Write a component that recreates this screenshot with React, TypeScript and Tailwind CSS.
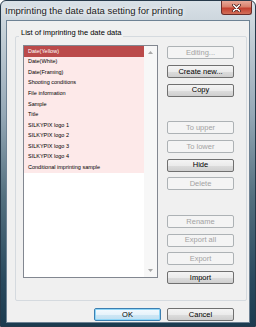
const items = [
  "Date(Yellow)",
  "Date(White)",
  "Date(Framing)",
  "Shooting conditions",
  "File information",
  "Sample",
  "Title",
  "SILKYPIX logo 1",
  "SILKYPIX logo 2",
  "SILKYPIX logo 3",
  "SILKYPIX logo 4",
  "Conditional imprinting sample",
];

// null = empty slot in the button column
const buttons: ({ label: string; enabled: boolean } | null)[] = [
  { label: "Editing...", enabled: false },
  { label: "Create new...", enabled: true },
  { label: "Copy", enabled: true },
  null,
  { label: "To upper", enabled: false },
  { label: "To lower", enabled: false },
  { label: "Hide", enabled: true },
  { label: "Delete", enabled: false },
  null,
  { label: "Rename", enabled: false },
  { label: "Export all", enabled: false },
  { label: "Export", enabled: false },
  { label: "Import", enabled: true },
];

function Button({
  label,
  enabled,
  isDefault,
}: {
  label: string;
  enabled: boolean;
  isDefault?: boolean;
}) {
  if (!enabled) {
    return (
      <div className="flex h-[13px] w-[67px] items-center justify-center rounded-[2px] border border-[#adb2b5] bg-[#f4f4f4] text-[7.5px] leading-none text-[#a3a3a3]">
        {label}
      </div>
    );
  }
  if (isDefault) {
    return (
      <div className="flex h-[13px] w-[67px] items-center justify-center rounded-[2px] border border-[#3c7fb1] bg-[linear-gradient(180deg,#f4fafe_0%,#e6f3fb_50%,#cfe7f5_51%,#bfdff1_100%)] text-[7.5px] leading-none text-black shadow-[inset_0_0_0_1px_#8ed6f8]">
        {label}
      </div>
    );
  }
  return (
    <div className="flex h-[13px] w-[67px] items-center justify-center rounded-[2px] border border-[#707070] bg-[linear-gradient(180deg,#f4f4f4_0%,#ebebeb_50%,#dddddd_51%,#cfcfcf_100%)] text-[7.5px] leading-none text-black">
      {label}
    </div>
  );
}

export default function App() {
  return (
    <div
      className="flex h-[327px] w-[256px] flex-col overflow-hidden rounded-t-[6px] border border-[#26394a] bg-[linear-gradient(180deg,#d9e1e7_0%,#c9d3da_8%,#95a8b6_35%,#54707f_60%,#2a4a5e_85%,#1b3b4f_100%)]"
      style={{ fontFamily: '"Liberation Sans", Arial, sans-serif' }}
    >
      {/* TITLE BAR */}
      <div className="flex h-[19px] shrink-0 items-start justify-between pl-[4px] pr-[3px]">
        <span className="mt-[4px] text-[9.5px] leading-[11px] text-[#1a1a1a] [text-shadow:0_0_4px_#ffffff,0_0_6px_#ffffff]">
          Imprinting the date data setting for printing
        </span>
        <div className="flex h-[14px] w-[31px] items-center justify-center rounded-b-[3px] border border-t-0 border-[#6b2d2a] bg-[linear-gradient(180deg,#e8a999_0%,#d9806c_45%,#c4402f_55%,#d2705a_100%)]">
          <svg width="9" height="8" viewBox="0 0 9 8">
            <path d="M1.5 1 L7.5 7 M7.5 1 L1.5 7" stroke="#4a1a16" strokeWidth="3" strokeLinecap="round" />
            <path d="M1.5 1 L7.5 7 M7.5 1 L1.5 7" stroke="#ffffff" strokeWidth="1.6" strokeLinecap="round" />
          </svg>
        </div>
      </div>

      {/* CLIENT AREA */}
      <div className="mx-[5px] mb-[3px] flex flex-1 flex-col border border-[#6e8294] bg-[#f0f0f0]">
        {/* GROUP BOX */}
        <div className="relative ml-[8px] mr-[2px] mt-[15px] flex rounded-[2px] border border-[#d5dadf] pb-[16px] pl-[7px] pr-[12px] pt-[8px]">
          <span className="absolute left-[3px] top-[-9px] bg-[#f0f0f0] px-[2px] text-[7.5px] leading-[9px] text-black">
            List of imprinting the date data
          </span>

          {/* LISTBOX */}
          <div className="flex h-[233px] w-[135px] border border-[#828790] bg-white">
            <div className="flex flex-1 flex-col">
              {items.map((item, i) => (
                <div
                  key={item}
                  className={
                    i === 0
                      ? "flex h-[10.6px] items-center bg-[#bb4a4a] pl-[4px] text-[5.5px] leading-none text-white"
                      : "flex h-[10.6px] items-center bg-[#fde9e9] pl-[4px] text-[5.5px] leading-none text-black"
                  }
                >
                  {item}
                </div>
              ))}
            </div>
            <div className="flex w-[13px] flex-col items-center justify-between bg-[#f7f7f7] py-[5px]">
              <svg width="5" height="3" viewBox="0 0 5 3">
                <path d="M0 3 L2.5 0 L5 3 Z" fill="#a8a8a8" />
              </svg>
              <svg width="5" height="3" viewBox="0 0 5 3">
                <path d="M0 0 L2.5 3 L5 0 Z" fill="#a8a8a8" />
              </svg>
            </div>
          </div>

          {/* BUTTONS */}
          <div className="ml-[9px] mt-[1px] flex flex-col gap-[5.75px]">
            {buttons.map((b, i) =>
              b ? (
                <Button key={b.label} label={b.label} enabled={b.enabled} />
              ) : (
                <div key={"gap" + i} className="h-[13px] w-[67px]" />
              )
            )}
          </div>
        </div>

        {/* OK / CANCEL */}
        <div className="mr-[15px] mt-[7px] flex justify-end gap-[6px]">
          <Button label="OK" enabled isDefault />
          <Button label="Cancel" enabled />
        </div>
      </div>
    </div>
  );
}
